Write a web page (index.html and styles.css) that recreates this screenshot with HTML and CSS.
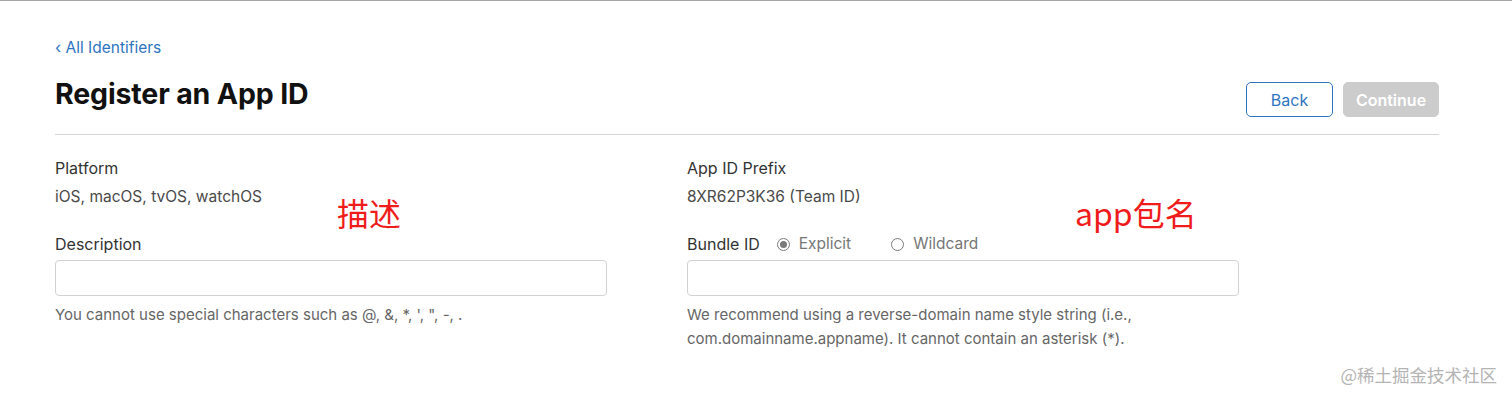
FILE: index.html
```html
<!DOCTYPE html>
<html lang="en">
<head>
<meta charset="utf-8">
<title>Register an App ID</title>
<link rel="stylesheet" href="styles.css">
</head>
<body>
<div class="page">
  <a class="back-link" href="#"><span class="chev">‹</span> All Identifiers</a>
  <div class="header">
    <h1 class="title">Register an App ID</h1>
    <div class="actions">
      <button class="btn btn-back">Back</button>
      <button class="btn btn-continue" disabled>Continue</button>
    </div>
  </div>
  <div class="form">
    <div class="col">
      <div class="label">Platform</div>
      <div class="value">iOS, macOS, tvOS, watchOS</div>
      <div class="label label-gap">Description</div>
      <div class="input"></div>
      <div class="help">You cannot use special characters such as @, &amp;, *, ', ", -, .</div>
      <span class="note note-left">描述</span>
    </div>
    <div class="col">
      <div class="label">App ID Prefix</div>
      <div class="value">8XR62P3K36 (Team ID)</div>
      <div class="label-row label-gap">
        <span class="label">Bundle ID</span>
        <span class="radio"><span class="dot checked"></span>Explicit</span>
        <span class="radio radio-second"><span class="dot"></span>Wildcard</span>
      </div>
      <div class="input"></div>
      <div class="help">We recommend using a reverse-domain name style string (i.e.,<br>com.domainname.appname). It cannot contain an asterisk (*).</div>
      <span class="note note-right">app包名</span>
    </div>
  </div>
</div>
<div class="watermark">@稀土掘金技术社区</div>
</body>
</html>
```

FILE: styles.css
```css
html, body {
  margin: 0;
  padding: 0;
  background: #fff;
}
body {
  border-top: 1px solid #a6a6a6;
  font-family: Inter, "Noto Sans", "Liberation Sans", sans-serif;
  color: #333;
  height: 398px;
  overflow: hidden;
  position: relative;
}
.page {
  padding: 37px 73px 0 55px;
}
.back-link {
  display: block;
  height: 20px;
  font-size: 15.5px;
  line-height: 20px;
  color: #2f74c0;
  text-decoration: none;
}
.chev {
  font-size: 16px;
  line-height: 1;
}
.header {
  display: flex;
  justify-content: space-between;
  align-items: flex-start;
  margin-top: 18px;
  padding-bottom: 17px;
  border-bottom: 1px solid #d6d6d6;
}
.title {
  margin: 0;
  font-size: 28.5px;
  line-height: 36px;
  font-weight: 700;
  color: #111;
  letter-spacing: -0.15px;
}
.actions {
  display: flex;
  gap: 10px;
  margin-top: 6px;
}
.btn {
  height: 35px;
  border-radius: 5px;
  font-family: Inter, "Noto Sans", sans-serif;
  font-size: 16px;
  padding: 0;
  cursor: pointer;
}
.btn-back {
  width: 87px;
  background: #fff;
  border: 1px solid #2f74c0;
  color: #2f74c0;
}
.btn-continue {
  width: 96px;
  background: #cccccc;
  border: 1px solid #cccccc;
  color: #fff;
  font-weight: 600;
}
.form {
  display: grid;
  grid-template-columns: 632px 1fr;
  padding-top: 23px;
}
.col {
  position: relative;
}
.label {
  font-size: 16px;
  line-height: 20px;
  color: #333;
}
.value {
  margin-top: 9px;
  font-size: 15.5px;
  line-height: 20px;
  color: #4a4a4a;
}
.label-gap {
  margin-top: 27px;
}
.label-row {
  display: flex;
  align-items: center;
  height: 20px;
}
.radio {
  display: inline-flex;
  align-items: center;
  font-size: 15.5px;
  line-height: 20px;
  color: #777;
  margin-left: 17px;
}
.radio-second {
  margin-left: 40px;
}
.dot {
  width: 11px;
  height: 11px;
  border: 1px solid #7a7a7a;
  border-radius: 50%;
  margin-right: 9px;
  position: relative;
  box-sizing: content-box;
  background: #fff;
}
.dot.checked::after {
  content: "";
  position: absolute;
  left: 2px;
  top: 2px;
  width: 7px;
  height: 7px;
  border-radius: 50%;
  background: #7a7a7a;
}
.input {
  margin-top: 6px;
  width: 552px;
  height: 36px;
  box-sizing: border-box;
  border: 1px solid #d2d2d2;
  border-radius: 4px;
  background: #fff;
}
.help {
  margin-top: 7px;
  font-size: 15px;
  line-height: 24px;
  color: #666;
}
.note {
  position: absolute;
  top: 38px;
  font-family: "Noto Sans CJK SC", "Noto Sans", sans-serif;
  font-size: 32px;
  line-height: 32px;
  color: #f01c1c;
}
.note-left {
  left: 282px;
}
.note-right {
  left: 388px;
}
.watermark {
  position: absolute;
  right: 15px;
  bottom: 13px;
  font-family: "Noto Sans CJK SC", sans-serif;
  font-size: 17.5px;
  line-height: 22px;
  color: #b4b4b4;
}
```
